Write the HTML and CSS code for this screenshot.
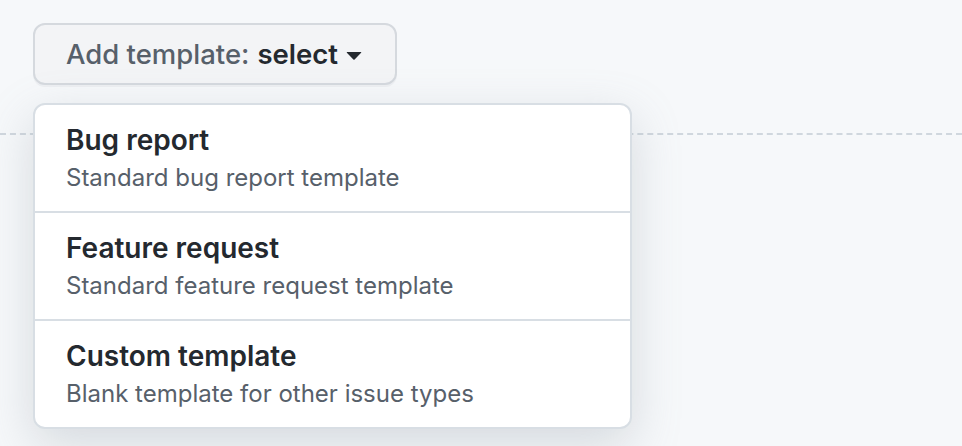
FILE: index.html
```html
<!DOCTYPE html>
<html>
<head>
<meta charset="utf-8">
<link rel="stylesheet" href="styles.css">
</head>
<body>
<div class="page">
  <div class="dropdown">
    <button class="btn">
      <span class="btn-label">Add template:</span>
      <span class="btn-value">select</span>
      <svg class="caret" width="32" height="32" viewBox="0 0 16 16"><path fill="#24292f" d="m4.427 7.427 3.396 3.396a.25.25 0 0 0 .354 0l3.396-3.396A.25.25 0 0 0 11.396 7H4.604a.25.25 0 0 0-.177.427Z"/></svg>
    </button>
    <div class="divider"></div>
    <div class="menu">
      <div class="item">
        <div class="title">Bug report</div>
        <div class="desc">Standard bug report template</div>
      </div>
      <div class="item">
        <div class="title">Feature request</div>
        <div class="desc">Standard feature request template</div>
      </div>
      <div class="item">
        <div class="title">Custom template</div>
        <div class="desc">Blank template for other issue types</div>
      </div>
    </div>
  </div>
</div>
</body>
</html>
```
FILE: styles.css
```css
html, body {
  margin: 0;
  padding: 0;
  background: #f6f8fa;
  font-family: Inter, "Liberation Sans", sans-serif;
  -webkit-font-smoothing: antialiased;
}
.page {
  padding: 23px 0 0 33px;
  height: 446px;
  box-sizing: border-box;
  overflow: hidden;
}
.dropdown {
  position: relative;
}
.btn {
  display: flex;
  align-items: center;
  height: 62px;
  box-sizing: border-box;
  padding: 0 25px 0 31px;
  border: 2px solid #d5d9de;
  border-radius: 12px;
  background: #f3f4f6;
  box-shadow: 0 2px 0 rgba(31,35,40,0.04);
  font-family: inherit;
  font-size: 27.5px;
  line-height: 40px;
  color: #57606a;
  cursor: pointer;
}
.btn-label {
  font-weight: 500;
  margin-right: 8px;
}
.btn-value {
  font-weight: 600;
  color: #24292f;
}
.caret {
  margin-left: 0;
}
.divider {
  position: absolute;
  left: -33px;
  top: 110px;
  border-top: 2px dashed #d0d7de;
  width: 962px;
}
.menu {
  position: absolute;
  top: 80px;
  left: 0;
  width: 599px;
  box-sizing: border-box;
  background: #fff;
  border: 2px solid #d8dee4;
  border-radius: 12px;
  box-shadow: 0 16px 48px rgba(140,149,159,0.3);
  overflow: hidden;
}
.item {
  padding: 15px 31px 15px;
  border-top: 2px solid #d8dee4;
}
.item:first-child {
  border-top: 0;
}
.title {
  font-size: 28px;
  font-weight: 600;
  line-height: 40px;
  color: #24292f;
}
.desc {
  font-size: 24px;
  line-height: 36px;
  color: #57606a;
}
```
